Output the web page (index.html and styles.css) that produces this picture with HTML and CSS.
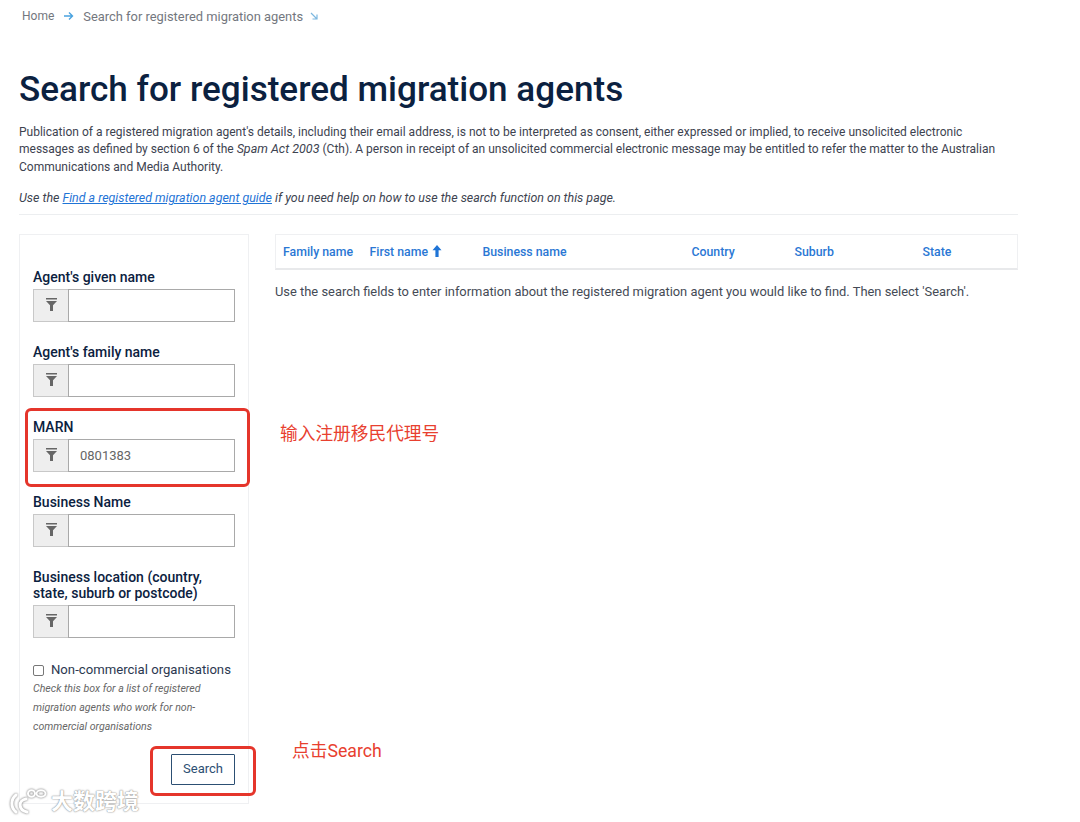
FILE: index.html
```html
<!DOCTYPE html>
<html lang="en">
<head>
<meta charset="utf-8">
<title>Search for registered migration agents</title>
<link rel="stylesheet" href="styles.css">
</head>
<body>
<nav class="crumbs">
  <span>Home</span>
  <svg class="crumb-arrow" width="11" height="10" viewBox="0 0 11 10"><path d="M1 5h8.5M6 1.5 9.5 5 6 8.5" fill="none" stroke="#4aa3df" stroke-width="1.4"/></svg>
  <span class="crumb-current">Search for registered migration agents</span>
  <svg class="crumb-down" width="8" height="8" viewBox="0 0 8 8"><path d="M1 1l5.5 5.5M7 2.5V7H2.5" fill="none" stroke="#7db8e0" stroke-width="1.2"/></svg>
</nav>
<main class="page">
  <h1>Search for registered migration agents</h1>
  <p class="intro">Publication of a registered migration agent's details, including their email address, is not to be interpreted as consent, either expressed or implied, to receive unsolicited electronic messages as defined by section 6 of the <em>Spam Act 2003</em> (Cth). A person in receipt of an unsolicited commercial electronic message may be entitled to refer the matter to the Australian Communications and Media Authority.</p>
  <p class="guide"><em>Use the <a href="#">Find a registered migration agent guide</a> if you need help on how to use the search function on this page.</em></p>
  <div class="columns">
    <form class="panel">
      <div class="field">
        <label>Agent's given name</label>
        <div class="inputrow"><span class="addon"><svg class="funnel" width="11" height="13" viewBox="0 0 11 13"><path d="M0 0h11v1.6H0zM0 3h11L7 7.2V13H4V7.2z" fill="#666"/></svg></span><span class="box"></span></div>
      </div>
      <div class="field">
        <label>Agent's family name</label>
        <div class="inputrow"><span class="addon"><svg class="funnel" width="11" height="13" viewBox="0 0 11 13"><path d="M0 0h11v1.6H0zM0 3h11L7 7.2V13H4V7.2z" fill="#666"/></svg></span><span class="box"></span></div>
      </div>
      <div class="field">
        <label>MARN</label>
        <div class="inputrow"><span class="addon"><svg class="funnel" width="11" height="13" viewBox="0 0 11 13"><path d="M0 0h11v1.6H0zM0 3h11L7 7.2V13H4V7.2z" fill="#666"/></svg></span><span class="box">0801383</span></div>
      </div>
      <div class="field">
        <label>Business Name</label>
        <div class="inputrow"><span class="addon"><svg class="funnel" width="11" height="13" viewBox="0 0 11 13"><path d="M0 0h11v1.6H0zM0 3h11L7 7.2V13H4V7.2z" fill="#666"/></svg></span><span class="box"></span></div>
      </div>
      <div class="field">
        <label>Business location (country, state, suburb or postcode)</label>
        <div class="inputrow"><span class="addon"><svg class="funnel" width="11" height="13" viewBox="0 0 11 13"><path d="M0 0h11v1.6H0zM0 3h11L7 7.2V13H4V7.2z" fill="#666"/></svg></span><span class="box"></span></div>
      </div>
      <div class="check">
        <span class="checkbox"></span>
        <span>Non-commercial organisations</span>
      </div>
      <p class="hint">Check this box for a list of registered migration agents who work for non-commercial organisations</p>
      <div class="actions"><span class="btn">Search</span></div>
    </form>
    <section class="results">
      <div class="thead">
        <span class="th th-family">Family name</span>
        <span class="th th-first">First name <svg class="sort" width="10" height="12" viewBox="0 0 10 12"><path d="M5 0 9.5 5.2H6.6V12H3.4V5.2H.5z" fill="#1f74d6"/></svg></span>
        <span class="th th-business">Business name</span>
        <span class="th th-country">Country</span>
        <span class="th th-suburb">Suburb</span>
        <span class="th th-state">State</span>
      </div>
      <p class="empty">Use the search fields to enter information about the registered migration agent you would like to find. Then select 'Search'.</p>
    </section>
  </div>
</main>
<div class="mark mark-marn"></div>
<div class="mark mark-search"></div>
<div class="note note-marn">输入注册移民代理号</div>
<div class="note note-search">点击Search</div>
<div class="watermark">
  <svg class="wm-logo" width="40" height="28" viewBox="0 0 40 28"><g fill="none" stroke="#fff" stroke-width="3" stroke-linecap="round"><path d="M7 7C2 11 1 19 7 24"/><path d="M17 11C9 12 9 22 18 24"/></g><g fill="none" stroke="#fff" stroke-width="2"><ellipse cx="22.5" cy="5.5" rx="3.5" ry="3.2"/><ellipse cx="32" cy="5.5" rx="4.5" ry="3.2"/></g></svg>
  <span class="wm-text">大数跨境</span>
</div>
</body>
</html>
```
FILE: styles.css
```css
* { box-sizing: border-box; }
html, body { margin: 0; padding: 0; }
body {
  width: 1080px;
  height: 822px;
  position: relative;
  overflow: hidden;
  background: #fff;
  font-family: Roboto, "Noto Sans CJK SC", sans-serif;
  color: #3d4350;
}
.crumbs {
  display: flex;
  align-items: center;
  height: 16px;
  margin: 8px 0 0 22px;
  font-size: 12px;
  color: #73777e;
}
.crumb-current { font-size: 12.9px; }
.crumb-arrow { margin: 0 9px 0 9px; }
.crumb-down { margin-left: 7px; margin-top: -1px; }
.page { width: 999px; margin-left: 19px; }
h1 {
  margin: 45px 0 0;
  font-size: 35.1px;
  line-height: 40px;
  font-weight: 500;
  color: #0b2140;
}
.intro {
  margin: 14.5px 0 0;
  font-size: 12.03px;
  line-height: 17.5px;
}
.intro em { font-size: 12.5px; line-height: 1; }
.guide {
  margin: 13px 0 0;
  padding-bottom: 7px;
  font-size: 12.43px;
  line-height: 18px;
  border-bottom: 1px solid #eceef0;
}
.guide a { color: #1f74d6; }
.columns { display: flex; gap: 26px; margin-top: 19px; align-items: flex-start; }
.panel {
  width: 230px;
  height: 570px;
  flex: none;
  padding: 34px 13px 0 13px;
  border: 1px solid #eff0f2;
}
.field { margin-bottom: 22px; }
.field label {
  display: block;
  margin-bottom: 4px;
  font-size: 14px;
  line-height: 16px;
  font-weight: 500;
  color: #0b2140;
}
.inputrow { display: flex; height: 33px; }
.addon {
  width: 35px;
  display: flex;
  align-items: center;
  justify-content: center;
  background: #eeeeee;
  border: 1px solid #c8c8c8;
  border-right: 0;
}
.funnel { margin-top: -2px; }
.box {
  flex: 1;
  display: flex;
  align-items: center;
  padding-left: 11px;
  border: 1px solid #a9a9a9;
  font-size: 13px;
  color: #666;
}
.check {
  display: flex;
  align-items: center;
  gap: 7px;
  margin-top: 24px;
  font-size: 13.15px;
  line-height: 16px;
  color: #2b3850;
}
.checkbox {
  width: 11px;
  height: 11px;
  border: 1px solid #777;
  border-radius: 2px;
}
.hint {
  margin: 1px 0 0;
  font-size: 10.6px;
  line-height: 19px;
  font-style: italic;
  color: #666;
}
.actions { display: flex; justify-content: flex-end; margin-top: 18px; }
.btn {
  width: 64px;
  height: 31px;
  display: flex;
  align-items: center;
  justify-content: center;
  padding-bottom: 2px;
  border: 1px solid #2c4f73;
  border-radius: 1px;
  font-size: 13px;
  color: #2c4f73;
}
.results { flex: 1; }
.thead {
  display: flex;
  align-items: center;
  height: 36px;
  padding-top: 1px;
  border: 1px solid #eff0f2;
  border-bottom: 2px solid #e8e9eb;
}
.th { font-size: 12.3px; font-weight: 500; color: #2a77d4; }
.th-family { margin-left: 7px; width: 86.5px; }
.th-first { display: flex; align-items: center; gap: 4px; width: 113px; }
.th-business { width: 209px; }
.th-country { width: 103px; }
.th-suburb { width: 128px; }
.sort { margin-bottom: 3px; }
.empty { margin: 14px 0 0; font-size: 12.9px; line-height: 16px; color: #444a55; }
.mark {
  position: absolute;
  border: 3px solid #e5352b;
  border-radius: 6px;
}
.mark-marn { left: 25px; top: 408px; width: 225px; height: 79px; }
.mark-search { left: 150px; top: 746px; width: 106px; height: 50px; }
.note { position: absolute; font-size: 17.7px; line-height: 20px; color: #e8402f; }
.note-marn { left: 280px; top: 424px; }
.note-search { left: 292px; top: 741px; }
.watermark {
  position: absolute;
  left: 9px;
  top: 788px;
  display: flex;
  align-items: center;
  gap: 2px;
  color: #fff;
}
.wm-logo { filter: drop-shadow(0 0 1px #666); }
.wm-text {
  font-size: 22px;
  line-height: 28px;
  font-weight: 700;
  text-shadow: 0 0 1px #888, 0 0 2px #999;
}
```
